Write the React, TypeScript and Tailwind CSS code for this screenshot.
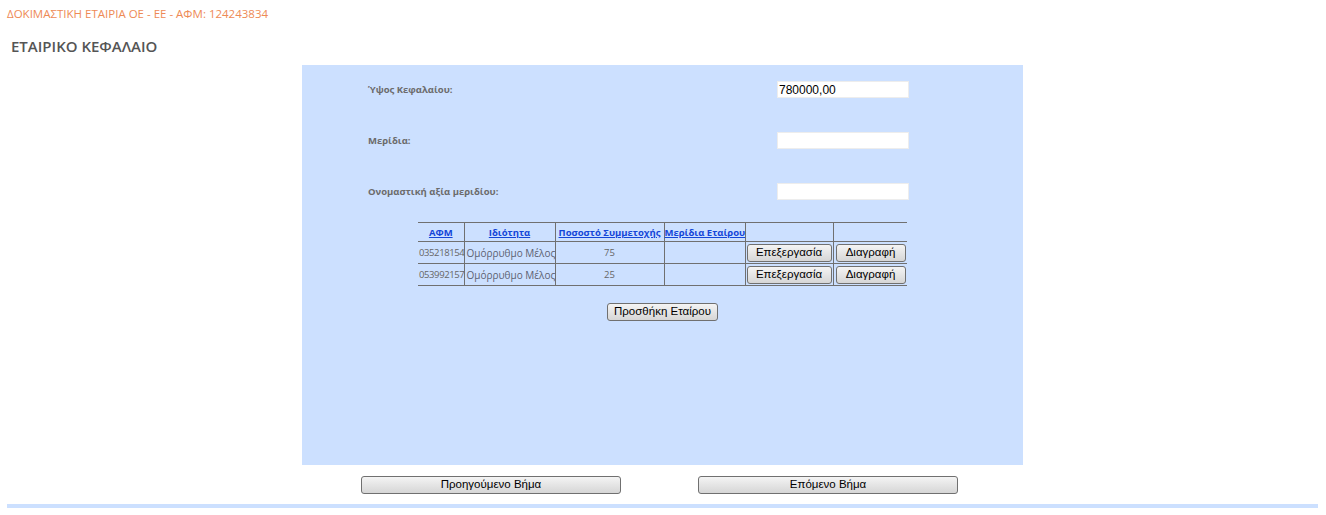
import React from "react";

const partners = [
  { afm: "035218154", role: "Ομόρρυθμο Μέλος", pct: "75", shares: "" },
  { afm: "053992157", role: "Ομόρρυθμο Μέλος", pct: "25", shares: "" },
];

function WinButton({ children, className = "" }: { children: React.ReactNode; className?: string }) {
  return (
    <button
      type="button"
      className={
        "h-[18px] rounded-[3px] border border-[#707070] bg-linear-to-b from-[#f4f4f4] to-[#d6d6d6] text-[11.5px] leading-none text-black font-['Liberation_Sans',Arial,sans-serif] " +
        className
      }
    >
      {children}
    </button>
  );
}

function FieldRow({ label, value }: { label: string; value?: string }) {
  return (
    <div className="flex items-center justify-between h-[17px]">
      <span className="text-[9.5px] font-bold text-[#6b6b6b] pt-[2px]">{label}</span>
      <div className="w-[132px] h-[17px] bg-white border border-[#ededed] flex items-center px-[1px] text-[12px] text-black font-['Liberation_Sans',Arial,sans-serif]">
        {value}
      </div>
    </div>
  );
}

export default function App() {
  return (
    <div className="w-[1326px] h-[515px] bg-white font-['Open_Sans','Noto_Sans',sans-serif] overflow-hidden">
      <div className="pl-[7px] pt-[6px] text-[11.5px] leading-[16px] text-[#ee8a55]">
        ΔΟΚΙΜΑΣΤΙΚΗ ΕΤΑΙΡΙΑ ΟΕ - ΕΕ - ΑΦΜ: 124243834
      </div>
      <div className="pl-[11px] pt-[14px] text-[15px] leading-[20px] font-semibold text-[#555]">
        ΕΤΑΙΡΙΚΟ ΚΕΦΑΛΑΙΟ
      </div>

      <div className="ml-[302px] mt-[9px] w-[721px] h-[400px] bg-[#cce0ff] pt-[16px]">
        <div className="pl-[66px] pr-[114px] flex flex-col gap-[34px]">
          <FieldRow label="Ύψος Κεφαλαίου:" value="780000,00" />
          <FieldRow label="Μερίδια:" />
          <FieldRow label="Ονομαστική αξία μεριδίου:" />
        </div>

        <table className="ml-[116px] mt-[22px] w-[489px] table-fixed border-collapse text-[10px]">
          <colgroup>
            <col className="w-[46px]" />
            <col className="w-[91px]" />
            <col className="w-[109px]" />
            <col className="w-[81px]" />
            <col className="w-[88px]" />
            <col className="w-[74px]" />
          </colgroup>
          <thead>
            <tr className="h-[19px] border-t border-b border-[#707070]">
              {["ΑΦΜ", "Ιδιότητα", "Ποσοστό Συμμετοχής", "Μερίδια Εταίρου"].map((h, i) => (
                <th
                  key={h}
                  className={"p-0 align-top pt-[3px] text-[9.5px] font-bold text-[#1446d8] underline whitespace-nowrap overflow-visible text-center " + (i > 0 ? "border-l border-[#707070]" : "")}
                >
                  {h}
                </th>
              ))}
              <th className="p-0 border-l border-[#707070]" />
              <th className="p-0 border-l border-[#707070]" />
            </tr>
          </thead>
          <tbody>
            {partners.map((p) => (
              <tr key={p.afm} className="h-[22px] border-b border-[#707070] text-[#666]">
                <td className="p-0 pl-[1px] pt-[1px] whitespace-nowrap overflow-hidden text-[9.5px] tracking-[-0.4px]">{p.afm}</td>
                <td className="p-0 pl-[2px] pt-[1px] border-l border-[#707070] whitespace-nowrap overflow-hidden text-[#5c6272]">{p.role}</td>
                <td className="p-0 pt-[1px] border-l border-[#707070] text-center text-[9.5px]">{p.pct}</td>
                <td className="p-0 border-l border-[#707070] text-center">{p.shares}</td>
                <td className="p-0 border-l border-[#707070] pl-[1px]">
                  <WinButton className="w-[85px]">Επεξεργασία</WinButton>
                </td>
                <td className="p-0 border-l border-[#707070] pl-[2px]">
                  <WinButton className="w-[70px]">Διαγραφή</WinButton>
                </td>
              </tr>
            ))}
          </tbody>
        </table>

        <div className="mt-[17px] flex justify-center">
          <WinButton className="w-[111px]">Προσθήκη Εταίρου</WinButton>
        </div>
      </div>

      <div className="mt-[11px] flex justify-center gap-[77px] pr-[7px]">
        <WinButton className="w-[260px]">Προηγούμενο Βήμα</WinButton>
        <WinButton className="w-[260px]">Επόμενο Βήμα</WinButton>
      </div>

      <div className="mt-[10px] ml-[7px] w-[1311px] h-[4px] bg-[#cce0ff]" />
    </div>
  );
}
